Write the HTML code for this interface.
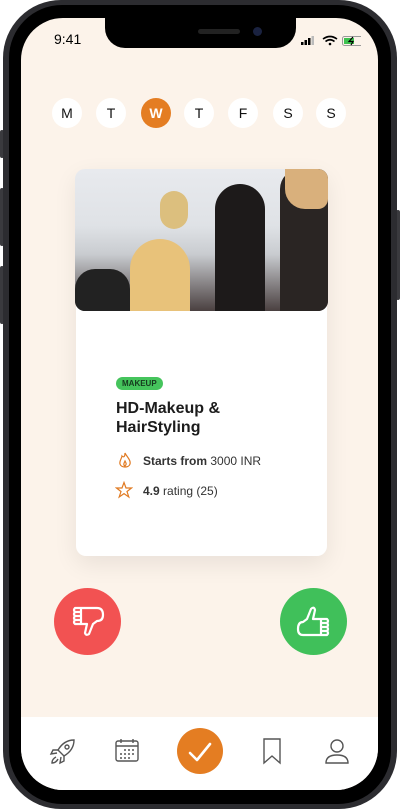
<!DOCTYPE html>
<html><head><meta charset="utf-8"><style>
*{margin:0;padding:0;box-sizing:border-box}
body{width:400px;height:809px;background:#fff;position:relative;overflow:hidden;font-family:"Liberation Sans",sans-serif}
.btn{position:absolute;left:0;width:4px;background:#3a3a3e;border-radius:2px}
.phone{position:absolute;left:3px;top:0;width:394px;height:809px;border-radius:58px;background:#2c2c30}
.inner{position:absolute;left:6px;top:5px;right:6px;bottom:5px;border-radius:53px;background:#000}
.screen{position:absolute;left:21px;top:18px;width:357px;height:772px;border-radius:42px;background:#fcf3ea;overflow:hidden}
.notch{position:absolute;left:84px;top:0;width:191px;height:30px;background:#000;border-radius:0 0 20px 20px}
.day{position:absolute;top:80px;width:30px;height:30px;border-radius:50%;background:#fff;text-align:center;line-height:30px;font-size:14px;color:#111}
.card{position:absolute;left:55px;top:151px;width:251px;height:387px;background:#fff;border-radius:10px;box-shadow:0 8px 24px rgba(0,0,0,.08)}
.photo{position:absolute;left:54px;top:151px;width:253px;height:142px;border-radius:10px;overflow:hidden;
background:linear-gradient(180deg,#e8eaee 0%,#dfe2e6 40%,#c9ccd0 60%,#4a4040 100%)}
.tab{position:absolute;left:0;top:699px;width:357px;height:73px;background:#fff}
</style></head><body>
<div class="btn" style="top:130px;height:28px"></div>
<div class="btn" style="top:188px;height:58px"></div>
<div class="btn" style="top:266px;height:58px"></div>
<div class="btn" style="left:396px;top:210px;height:90px"></div>
<div class="phone"><div class="inner"></div></div>
<div class="screen">
 <div class="notch"><div style="position:absolute;left:93px;top:11px;width:42px;height:5px;border-radius:3px;background:#222"></div><div style="position:absolute;left:148px;top:9px;width:9px;height:9px;border-radius:50%;background:#1a2240"></div></div>
 <div style="position:absolute;left:33px;top:13px;font-size:14px;color:#000">9:41</div>
 <svg style="position:absolute;left:280px;top:17px" width="60" height="12">
  <rect x="0" y="7" width="2.5" height="3" fill="#000"/><rect x="3.5" y="5" width="2.5" height="5" fill="#000"/><rect x="7" y="3" width="2.5" height="7" fill="#000"/><rect x="10.5" y="1" width="2.5" height="9" fill="#bbb"/>
  <path d="M22 4 Q29 -1 36 4 M24.5 6.5 Q29 3 33.5 6.5" stroke="#000" stroke-width="1.6" fill="none"/><circle cx="29" cy="9" r="1.3" fill="#000"/>
  <rect x="41.5" y="1.5" width="20" height="9" rx="2" fill="none" stroke="#999"/><rect x="43" y="3" width="10" height="6" fill="#3ec24f"/><path d="M52 2 L48 6.5 H52 L50 10" stroke="#000" stroke-width="1.2" fill="none"/>
 </svg>
 <div class="day" style="left:31px">M</div>
 <div class="day" style="left:75px">T</div>
 <div class="day" style="left:120px;background:#e47d22;color:#fff;font-weight:bold">W</div>
 <div class="day" style="left:163px">T</div>
 <div class="day" style="left:207px">F</div>
 <div class="day" style="left:252px">S</div>
 <div class="day" style="left:295px">S</div>
 <div class="card"></div>
 <div class="photo">
  <div style="position:absolute;left:55px;top:70px;width:60px;height:72px;border-radius:30px 30px 0 0;background:#e8c27a"></div>
  <div style="position:absolute;left:0;top:100px;width:55px;height:42px;background:#222;border-radius:20px 20px 0 0"></div>
  <div style="position:absolute;left:140px;top:15px;width:50px;height:127px;background:#1d1a1a;border-radius:25px 25px 0 0"></div>
  <div style="position:absolute;left:205px;top:0;width:48px;height:142px;background:#2a2523;border-radius:20px 0 0 0"></div>
  <div style="position:absolute;left:210px;top:0;width:43px;height:40px;background:#d9b07c;border-radius:0 0 10px 20px"></div>
  <div style="position:absolute;left:85px;top:22px;width:28px;height:38px;background:#dcbf7e;border-radius:14px"></div>
 </div>
 <div style="position:absolute;left:95px;top:359px;background:#45c45c;color:#163a1e;font-size:8px;font-weight:bold;padding:2px 6px;border-radius:7px">MAKEUP</div>
 <div style="position:absolute;left:95px;top:381px;font-size:16px;font-weight:bold;color:#1c1c1c;line-height:19px">HD-Makeup &amp;<br>HairStyling</div>
 <svg style="position:absolute;left:97px;top:434px" width="14" height="18"><path d="M7 1 C9 5 13 8 12 12 C11 16 3 16 2 12 C1 9 4 6 4 4 C6 6 7 4 7 1 Z M7 9 C8 11 9 12 7 14 C5 13 6 11 7 9Z" fill="none" stroke="#e07a22" stroke-width="1.2"/></svg>
 <div style="position:absolute;left:122px;top:436px;font-size:12px;color:#333"><b>Starts from</b> 3000 INR</div>
 <svg style="position:absolute;left:94px;top:463px" width="18" height="18"><path d="M9 1.5 L11 7 L16.5 7 L12 10.5 L13.8 16 L9 12.6 L4.2 16 L6 10.5 L1.5 7 L7 7 Z" fill="none" stroke="#e07a22" stroke-width="1.2"/></svg>
 <div style="position:absolute;left:122px;top:466px;font-size:12px;color:#333"><b>4.9</b> rating (25)</div>
 <div style="position:absolute;left:33px;top:570px;width:67px;height:67px;border-radius:50%;background:#f25252"></div>
 <svg style="position:absolute;left:46px;top:582px" width="42" height="42" viewBox="0 0 42 42"><g fill="none" stroke="#fff" stroke-width="2.2" stroke-linejoin="round"><path d="M14 8 H30 Q36 8 36 15 Q36 21 30 21 L26 24 L22 34 Q19 36 18 33 L20 24 H14"/><path d="M14 8 H8 Q6 10 8 12 H14 M8 12 Q6 14 8 16 H14 M8 16 Q6 18 8 20 H14 M8 20 Q6 22 8 24 H14 M14 8 V24"/></g></svg>
 <div style="position:absolute;left:259px;top:570px;width:67px;height:67px;border-radius:50%;background:#40c05a"></div>
 <svg style="position:absolute;left:272px;top:583px" width="42" height="42" viewBox="0 0 42 42"><g fill="none" stroke="#fff" stroke-width="2.2" stroke-linejoin="round"><path d="M28 34 H10 Q5 34 5 28 Q5 21 10 21 L14 18 L18 8 Q21 5 22 9 L20 18 H28"/><path d="M28 18 H34 Q36 20 34 22 H28 M34 22 Q36 24 34 26 H28 M34 26 Q36 28 34 30 H28 M34 30 Q36 32 34 34 H28 M28 18 V34"/></g></svg>
 <div class="tab">
  <svg style="position:absolute;left:28px;top:21px" width="28" height="28" viewBox="0 0 28 28"><g fill="none" stroke="#555" stroke-width="1.4"><path d="M25 2 Q15 2 9 12 L15 18 Q25 12 25 2Z"/><circle cx="18" cy="9" r="2"/><path d="M9 12 L4 12 L2 16 L8 15 M15 18 L15 23 L11 25 L12 19 M7 19 Q3 21 3 25 Q7 25 9 21"/></g></svg>
  <svg style="position:absolute;left:92px;top:20px" width="28" height="28" viewBox="0 0 28 28"><g fill="none" stroke="#555" stroke-width="1.4"><rect x="3" y="4" width="22" height="20" rx="2"/><path d="M3 9 H25 M8 2 V6 M20 2 V6"/></g><g fill="#555"><circle cx="12" cy="13" r="1"/><circle cx="16" cy="13" r="1"/><circle cx="20" cy="13" r="1"/><circle cx="8" cy="17" r="1"/><circle cx="12" cy="17" r="1"/><circle cx="16" cy="17" r="1"/><circle cx="20" cy="17" r="1"/><circle cx="8" cy="21" r="1"/><circle cx="12" cy="21" r="1"/><circle cx="16" cy="21" r="1"/></g></svg>
  <div style="position:absolute;left:156px;top:11px;width:46px;height:46px;border-radius:50%;background:#e47d22"></div>
  <svg style="position:absolute;left:165px;top:21px" width="28" height="28"><path d="M4 15 L11 22 L24 6" fill="none" stroke="#fff" stroke-width="2.6" stroke-linecap="round" stroke-linejoin="round"/></svg>
  <svg style="position:absolute;left:239px;top:20px" width="24" height="28"><path d="M4 2 H20 V26 L12 19 L4 26 Z" fill="none" stroke="#555" stroke-width="1.4"/></svg>
  <svg style="position:absolute;left:302px;top:20px" width="28" height="28"><g fill="none" stroke="#555" stroke-width="1.4"><circle cx="14" cy="9" r="6"/><path d="M3 26 Q3 18 14 18 Q25 18 25 26 Z"/></g></svg>
 </div>
</div>
</body></html>
